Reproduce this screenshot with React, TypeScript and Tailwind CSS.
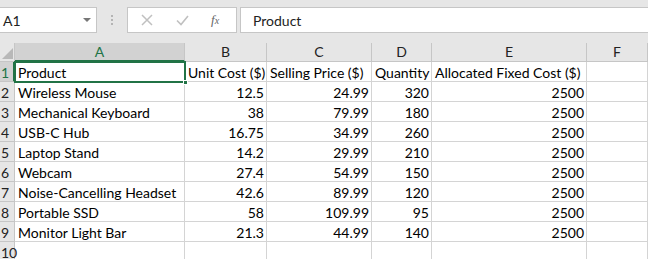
import React from "react"

const cols = ["A", "B", "C", "D", "E", "F"]

const rows: (string | number)[][] = [
  ["Product", "Unit Cost ($)", "Selling Price ($)", "Quantity", "Allocated Fixed Cost ($)", ""],
  ["Wireless Mouse", 12.5, 24.99, 320, 2500, ""],
  ["Mechanical Keyboard", 38, 79.99, 180, 2500, ""],
  ["USB-C Hub", 16.75, 34.99, 260, 2500, ""],
  ["Laptop Stand", 14.2, 29.99, 210, 2500, ""],
  ["Webcam", 27.4, 54.99, 150, 2500, ""],
  ["Noise-Cancelling Headset", 42.6, 89.99, 120, 2500, ""],
  ["Portable SSD", 58, 109.99, 95, 2500, ""],
  ["Monitor Light Bar", 21.3, 44.99, 140, 2500, ""],
  ["", "", "", "", "", ""],
]

const gridCols = "grid grid-cols-[15px_170px_82px_105px_60px_155px_1fr]"

export default function App() {
  return (
    <div className="w-[648px] h-[259px] overflow-hidden bg-white text-[14px] text-black font-['Lato','Liberation_Sans',sans-serif]">
      {/* Formula bar */}
      <div className="h-[43px] bg-[#e6e6e6] flex items-start pt-[7px]">
        <div className="w-[97px] h-[26px] bg-white border border-[#c6c6c6] border-l-0 flex items-center justify-between pl-[3px] pr-[5px]">
          <span className="text-[#222]">A1</span>
          <svg width="8" height="4" viewBox="0 0 8 4">
            <path d="M0 0h8L4 4z" fill="#777" />
          </svg>
        </div>
        <div className="w-[30px] h-[26px] flex flex-col items-center justify-center gap-[2px]">
          <span className="w-[2px] h-[2px] bg-[#b4b4b4]" />
          <span className="w-[2px] h-[2px] bg-[#b4b4b4]" />
          <span className="w-[2px] h-[2px] bg-[#b4b4b4]" />
        </div>
        <div className="w-[110px] h-[26px] bg-white border border-[#c6c6c6] flex items-center">
          <svg className="ml-[13px]" width="12" height="12" viewBox="0 0 12 12">
            <path d="M1 1l10 10M11 1L1 11" stroke="#c0c0c0" strokeWidth="1.5" />
          </svg>
          <svg className="ml-[23px]" width="13" height="11" viewBox="0 0 13 11">
            <path d="M1 5.5l4 4L12 1" stroke="#c0c0c0" strokeWidth="1.6" fill="none" />
          </svg>
          <span className="ml-[22px] text-[13px] italic text-[#666] font-['Liberation_Serif',serif]">
            f<span className="text-[10px]">x</span>
          </span>
        </div>
        <div className="ml-[3px] flex-1 h-[26px] bg-white border border-[#c6c6c6] border-r-0 flex items-center pl-[12px] text-[#222]">
          Product
        </div>
      </div>

      {/* Sheet */}
      <div className="relative">
        <div className={`${gridCols} h-[19px] bg-[#e6e6e6]`}>
          <div className="border-r border-b border-[#c6c6c6] relative overflow-hidden">
            <svg className="absolute right-[1px] bottom-[2px]" width="11" height="11" viewBox="0 0 11 11">
              <path d="M11 0v11H0z" fill="#b8b8b8" />
            </svg>
          </div>
          {cols.map((c, i) => (
            <div
              key={c}
              className={
                i === 0
                  ? "bg-[#d2d2d2] border-r border-[#c6c6c6] border-b-2 border-b-[#217346] text-[#217346] flex items-center justify-center leading-none"
                  : "border-r border-b border-[#c6c6c6] flex items-center justify-center leading-none text-[#222]"
              }
            >
              {c}
            </div>
          ))}
        </div>

        {rows.map((r, ri) => (
          <div key={ri} className={`${gridCols} h-[20px]`}>
            <div
              className={
                ri === 0
                  ? "bg-[#d2d2d2] border-r-2 border-r-[#217346] border-b border-[#c6c6c6] text-[#217346] flex items-center leading-none pl-[1px] pt-[2px]"
                  : "bg-[#e6e6e6] border-r border-b border-[#c6c6c6] flex items-center leading-none pl-[1px] pt-[2px] text-[#222]"
              }
            >
              {ri + 1}
            </div>
            {r.map((v, ci) => (
              <div
                key={ci}
                className={
                  "border-r border-b border-[#d4d4d4] flex items-center whitespace-nowrap overflow-hidden leading-none pt-[2px] " +
                  (typeof v === "number" ? "justify-end pr-[2px]" : "justify-start pl-[3px]")
                }
              >
                {v}
              </div>
            ))}
          </div>
        ))}

        {/* Active cell A1 */}
        <div className="absolute left-[14px] top-[18px] w-[172px] h-[22px] border-2 border-[#217346] pointer-events-none" />
        <div className="absolute left-[183px] top-[37px] w-[5px] h-[5px] bg-[#217346] border border-white" />
      </div>
    </div>
  )
}
